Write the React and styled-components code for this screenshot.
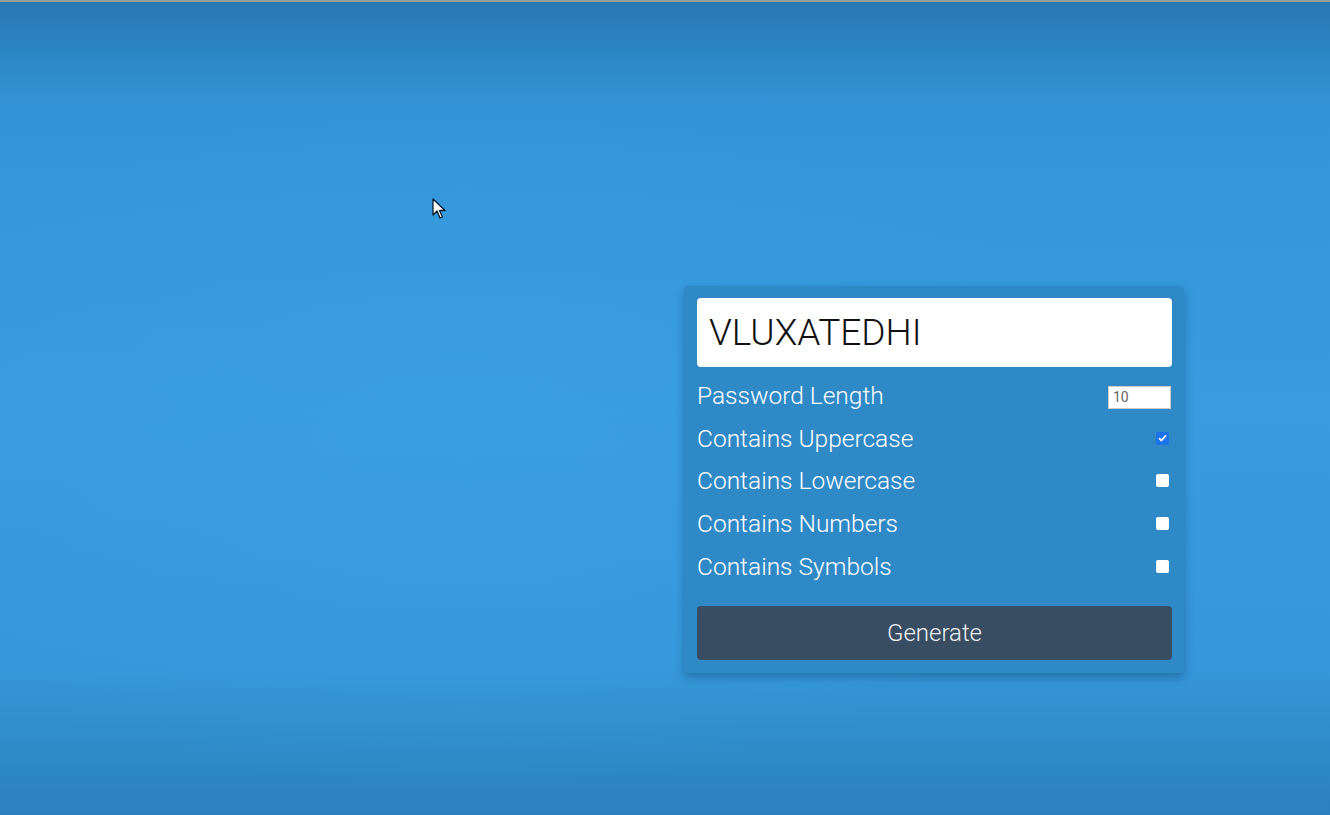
import React, { useState } from 'react'
import styled, { createGlobalStyle } from 'styled-components'

const GlobalStyle = createGlobalStyle`
  html, body {
    margin: 0;
    padding: 0;
  }
  body {
    font-family: Roboto, "Liberation Sans", sans-serif;
  }
`

const Page = styled.div`
  position: relative;
  box-sizing: border-box;
  height: 815px;
  border-top: 2px solid #9a9a96;
  background:
    radial-gradient(ellipse 70% 60% at 35% 55%, rgba(60, 162, 228, 0.5), rgba(60, 162, 228, 0) 70%),
    linear-gradient(180deg, #2878b2 0%, #3395d8 13%, #389cdf 50%, #3597d9 82%, #2b80bc 100%);
  display: flex;
  justify-content: flex-end;
  align-items: flex-start;
  padding: 284px 146px 0 0;
`

const Cursor = styled.svg`
  position: absolute;
  left: 432px;
  top: 196px;
`

const Card = styled.div`
  width: 500px;
  box-sizing: border-box;
  padding: 12px 12px 13px 13px;
  background: #2f89c6;
  border-radius: 4px;
  box-shadow: 0 4px 10px rgba(10, 40, 80, 0.35);
`

const Result = styled.div`
  height: 69px;
  background: #fff;
  border-radius: 4px;
  display: flex;
  align-items: center;
  padding-left: 12px;
  font-size: 37px;
  font-weight: 300;
  color: #111;
`

const Settings = styled.div`
  display: flex;
  flex-direction: column;
  margin-top: 7px;
`

const Row = styled.label`
  display: flex;
  align-items: center;
  justify-content: space-between;
  height: 42.8px;
  color: #fff;
  font-size: 24.5px;
  font-weight: 300;
`

const NumberInput = styled.input`
  width: 63px;
  height: 23px;
  box-sizing: border-box;
  border: 1px solid #ccc;
  padding: 0 4px;
  font-family: Roboto, sans-serif;
  font-size: 14px;
  color: #666;
  margin-right: 1px;
  margin-top: 4px;
`

const Box = styled.span`
  width: 13px;
  height: 13px;
  border-radius: 2px;
  margin-right: 3px;
  background: ${p => (p.$checked ? '#1a73e8' : '#fff')};
  display: flex;
  align-items: center;
  justify-content: center;
`

const Button = styled.button`
  margin-top: 18px;
  width: 100%;
  height: 54px;
  border: none;
  border-radius: 4px;
  background: #384c62;
  color: #eef1f3;
  font-family: Roboto, sans-serif;
  font-size: 24px;
  font-weight: 300;
  cursor: pointer;
`

const options = [
  { label: 'Contains Uppercase', checked: true },
  { label: 'Contains Lowercase', checked: false },
  { label: 'Contains Numbers', checked: false },
  { label: 'Contains Symbols', checked: false },
]

export default function App() {
  const [len] = useState(10)
  return (
    <>
      <GlobalStyle />
      <Page>
        <Cursor width="14" height="22" viewBox="0 0 14 22">
          <path d="M1 1 L1 17 L5 13 L8 20 L10.5 19 L7.5 12.5 L13 12.5 Z" fill="#fff" stroke="#0b1a2a" strokeWidth="1.3" strokeLinejoin="round" />
        </Cursor>
        <Card>
          <Result>VLUXATEDHI</Result>
          <Settings>
            <Row>
              Password Length
              <NumberInput type="number" defaultValue={len} />
            </Row>
            {options.map(o => (
              <Row key={o.label}>
                {o.label}
                <Box $checked={o.checked}>
                  {o.checked && (
                    <svg width="9" height="8" viewBox="0 0 9 8">
                      <path d="M1 4.2 L3.4 6.5 L8 1.3" fill="none" stroke="#fff" strokeWidth="1.8" />
                    </svg>
                  )}
                </Box>
              </Row>
            ))}
          </Settings>
          <Button>Generate</Button>
        </Card>
      </Page>
    </>
  )
}
